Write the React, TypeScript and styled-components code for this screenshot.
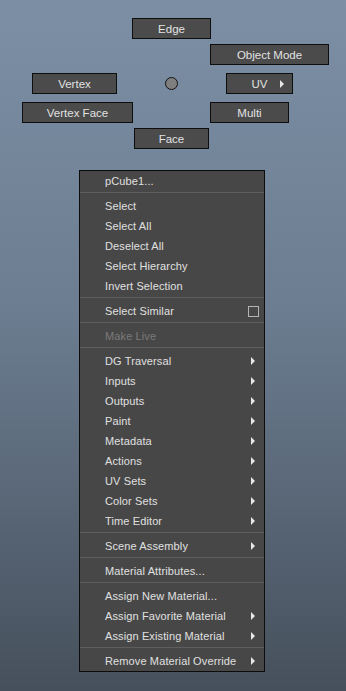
import React from "react";
import styled, { createGlobalStyle } from "styled-components";

const GlobalStyle = createGlobalStyle`
  html, body {
    margin: 0;
    padding: 0;
  }
  body {
    font-family: "Liberation Sans", Arial, sans-serif;
    font-size: 11px;
  }
`;

const Page = styled.div`
  display: flex;
  flex-direction: column;
  width: 346px;
  height: 691px;
  overflow: hidden;
  background: linear-gradient(#7c8fa4 0%, #6c7d91 45%, #46505c 100%);
`;

// radial marking menu: each button's spot round the centre is the content
const MarkingCanvas = styled.div`
  position: relative;
  height: 170px;
  flex-shrink: 0;
`;

const ModeButton = styled.div<{ $x: number; $y: number; $w: number; $sub?: boolean }>`
  position: absolute;
  left: ${(p) => p.$x}px;
  top: ${(p) => p.$y}px;
  width: ${(p) => p.$w}px;
  height: 21px;
  box-sizing: border-box;
  display: flex;
  align-items: center;
  justify-content: center;
  gap: 13px;
  padding-left: ${(p) => (p.$sub ? 17 : 0)}px;
  border: 1px solid #0e0e0e;
  background: #4b4b4b;
  color: #e2e2e2;
  font-size: 11.5px;
`;

const Triangle = styled.span`
  width: 0;
  height: 0;
  flex-shrink: 0;
  border-left: 4px solid #e8e8e8;
  border-top: 4px solid transparent;
  border-bottom: 4px solid transparent;
`;

const CenterDot = styled.div`
  position: absolute;
  left: 165px;
  top: 77px;
  width: 13px;
  height: 13px;
  box-sizing: border-box;
  border-radius: 50%;
  border: 1px solid #111;
  background: #7f7f7f;
`;

const MenuArea = styled.div`
  display: flex;
  padding-left: 79px;
`;

const Menu = styled.div`
  display: flex;
  flex-direction: column;
  width: 186px;
  box-sizing: border-box;
  border: 1px solid #0c0c0c;
  background: #474747;
  color: #e0e0e0;
  letter-spacing: 0.12px;
`;

const Item = styled.div<{ $disabled?: boolean }>`
  display: flex;
  align-items: center;
  height: 20px;
  padding-left: 25px;
  white-space: nowrap;
  color: ${(p) => (p.$disabled ? "#7b7b7b" : "#e0e0e0")};
`;

const Label = styled.span`
  flex: 1;
`;

const SubSlot = styled.span`
  display: flex;
  margin-right: 9px;
`;

const OptionBox = styled.span`
  width: 11px;
  height: 11px;
  margin-right: 5px;
  box-sizing: border-box;
  border: 1px solid #b4b4b4;
`;

const Separator = styled.div`
  height: 1px;
  margin: 1px 0 3px;
  background: #5e5e5e;
`;

type Entry =
  | { label: string; sub?: boolean; box?: boolean; disabled?: boolean }
  | "sep";

const entries: Entry[] = [
  { label: "pCube1..." },
  "sep",
  { label: "Select" },
  { label: "Select All" },
  { label: "Deselect All" },
  { label: "Select Hierarchy" },
  { label: "Invert Selection" },
  "sep",
  { label: "Select Similar", box: true },
  "sep",
  { label: "Make Live", disabled: true },
  "sep",
  { label: "DG Traversal", sub: true },
  { label: "Inputs", sub: true },
  { label: "Outputs", sub: true },
  { label: "Paint", sub: true },
  { label: "Metadata", sub: true },
  { label: "Actions", sub: true },
  { label: "UV Sets", sub: true },
  { label: "Color Sets", sub: true },
  { label: "Time Editor", sub: true },
  "sep",
  { label: "Scene Assembly", sub: true },
  "sep",
  { label: "Material Attributes..." },
  "sep",
  { label: "Assign New Material..." },
  { label: "Assign Favorite Material", sub: true },
  { label: "Assign Existing Material", sub: true },
  "sep",
  { label: "Remove Material Override", sub: true },
];

const modes = [
  { label: "Edge", x: 132, y: 18, w: 79 },
  { label: "Object Mode", x: 210, y: 44, w: 119 },
  { label: "Vertex", x: 32, y: 73, w: 85 },
  { label: "UV", x: 226, y: 73, w: 67, sub: true },
  { label: "Vertex Face", x: 22, y: 102, w: 111 },
  { label: "Multi", x: 210, y: 102, w: 79 },
  { label: "Face", x: 134, y: 128, w: 75 },
];

export default function App() {
  return (
    <Page>
      <GlobalStyle />
      <MarkingCanvas>
        {modes.map((m) => (
          <ModeButton key={m.label} $x={m.x} $y={m.y} $w={m.w} $sub={m.sub}>
            <span>{m.label}</span>
            {m.sub && <Triangle />}
          </ModeButton>
        ))}
        <CenterDot />
      </MarkingCanvas>
      <MenuArea>
        <Menu>
          {entries.map((e, i) =>
            e === "sep" ? (
              <Separator key={i} />
            ) : (
              <Item key={i} $disabled={e.disabled}>
                <Label>{e.label}</Label>
                {e.sub && (
                  <SubSlot>
                    <Triangle />
                  </SubSlot>
                )}
                {e.box && <OptionBox />}
              </Item>
            )
          )}
        </Menu>
      </MenuArea>
    </Page>
  );
}
